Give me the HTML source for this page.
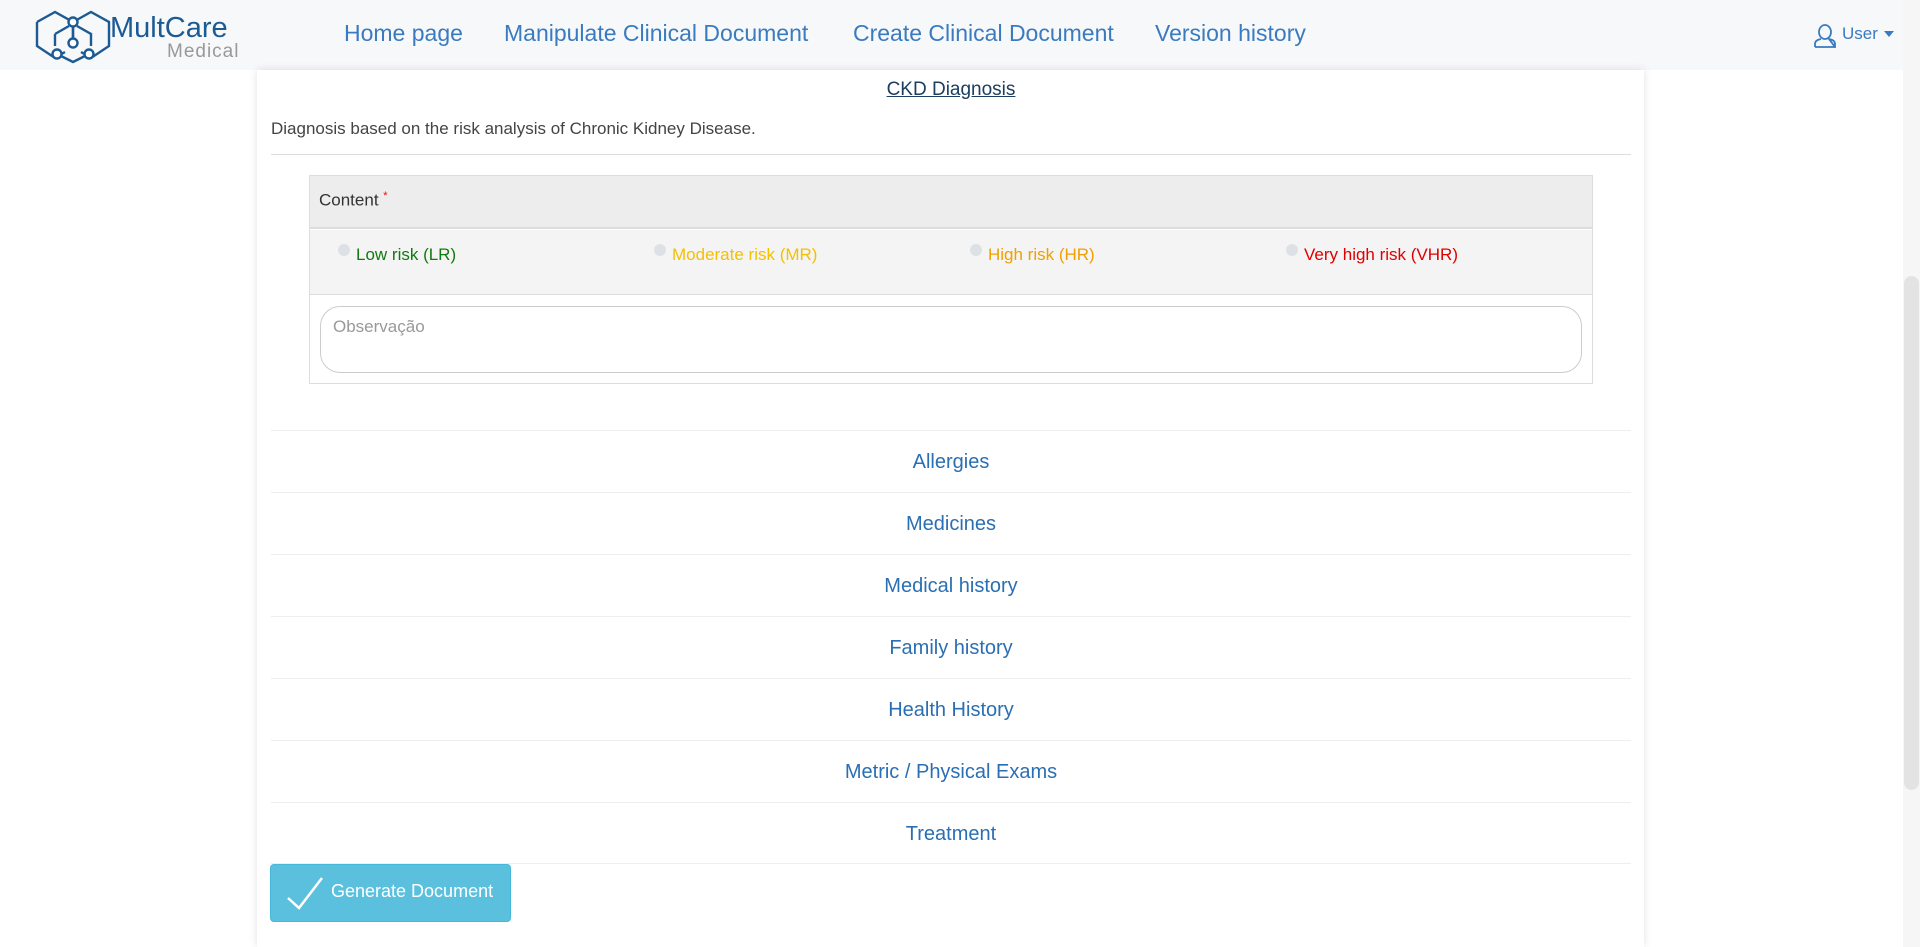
<!DOCTYPE html>
<html><head><meta charset="utf-8"><style>
*{box-sizing:border-box}
body{margin:0;width:1920px;height:947px;overflow:hidden;font-family:"Liberation Sans",sans-serif;background:#fff;position:relative}
.nav{position:absolute;left:0;top:0;width:1903px;height:70px;background:#f7f8fa}
.nav a{position:absolute;top:20px;font-size:23px;color:#3a7bbf;text-decoration:none}
.sb{position:absolute;right:0;top:0;width:17px;height:947px;background:#f6f6f6}
.thumb{position:absolute;right:1px;top:276px;width:15px;height:514px;background:#e3e3e3;border-radius:8px}
.card{position:absolute;left:257px;top:70px;width:1387px;height:877px;background:#fff;box-shadow:0 0 8px rgba(0,0,0,.12)}
.abs{position:absolute}
.acc{position:absolute;left:271px;width:1360px;height:62px;border-top:1px solid #eee;text-align:center;line-height:62px;font-size:20px;color:#2a6fb3}
.rad{position:absolute;top:244px;font-size:17px}
.rad i{display:inline-block;width:12px;height:12px;border-radius:50%;background:#dde1e6;margin-right:6px;vertical-align:4px}
</style></head><body>
<div class="nav">
<svg class="abs" style="left:35px;top:6px" width="80" height="58" viewBox="0 0 80 58" fill="none" stroke="#1c5a94" stroke-width="2.4">
<path d="M2 16 L20 6 L38 16 L38 40 M2 16 L2 40 L20 52 L30 46"/>
<path d="M38 16 L56 6 L74 16 L74 40 L56 52 L46 46"/>
<path d="M20 28 L34 20 M42 20 L56 28 L56 40 M20 28 L20 40 M26 50 L38 56 L50 50"/>
<path d="M38 16 L38 36"/>
<circle cx="38" cy="16" r="4.5" fill="#fff"/><circle cx="38" cy="37" r="4.5" fill="#fff"/>
<circle cx="22" cy="48" r="4.5" fill="#fff"/><circle cx="54" cy="48" r="4.5" fill="#fff"/>
</svg>
<div class="abs" style="left:110px;top:12px;font-size:29px;color:#1c5a94">MultCare</div>
<div class="abs" style="left:167px;top:41px;font-size:19px;color:#999;letter-spacing:1px">Medical</div>
<a style="left:344px">Home page</a>
<a style="left:504px">Manipulate Clinical Document</a>
<a style="left:853px">Create Clinical Document</a>
<a style="left:1155px">Version history</a>
<svg class="abs" style="left:1814px;top:24px" width="22" height="24" viewBox="0 0 22 24" fill="none" stroke="#3a7bbf" stroke-width="1.8"><ellipse cx="11" cy="8" rx="6" ry="7"/><path d="M1 23 L1 20 Q1 16 7 15 M15 15 Q21 16 21 20 L21 23 Z M1 23 L21 23"/></svg>
<div class="abs" style="left:1842px;top:24px;font-size:17px;color:#3a7bbf">User</div>
<div class="abs" style="left:1884px;top:31px;border-left:5px solid transparent;border-right:5px solid transparent;border-top:6px solid #3a7bbf"></div>
</div>
<div class="card"></div>
<div class="abs" style="left:271px;width:1360px;top:79px;text-align:center;font-size:19px;color:#1c3f60;text-decoration:underline">CKD Diagnosis</div>
<div class="abs" style="left:271px;top:119px;font-size:17px;color:#444">Diagnosis based on the risk analysis of Chronic Kidney Disease.</div>
<div class="abs" style="left:271px;top:154px;width:1360px;height:1px;background:#ddd"></div>
<div class="abs" style="left:309px;top:175px;width:1284px;height:209px;border:1px solid #ddd"></div>
<div class="abs" style="left:310px;top:176px;width:1282px;height:53px;background:#ededed;border-bottom:2px solid #ddd"></div>
<div class="abs" style="left:310px;top:230px;width:1282px;height:65px;background:#f4f4f4;border-bottom:1px solid #ddd"></div>
<div class="abs" style="left:319px;top:190px;font-size:17px;color:#333">Content <sup style="color:red;font-size:11px">*</sup></div>
<div class="rad" style="left:338px;color:#107a10"><i></i>Low risk (LR)</div>
<div class="rad" style="left:654px;color:#f5c000"><i></i>Moderate risk (MR)</div>
<div class="rad" style="left:970px;color:#f0a000"><i></i>High risk (HR)</div>
<div class="rad" style="left:1286px;color:#e00000"><i></i>Very high risk (VHR)</div>
<div class="abs" style="left:320px;top:306px;width:1262px;height:67px;border:1px solid #ccc;border-radius:20px;padding:10px 12px;font-size:17px;color:#999">Observação</div>
<div class="acc" style="top:430px">Allergies</div>
<div class="acc" style="top:492px">Medicines</div>
<div class="acc" style="top:554px">Medical history</div>
<div class="acc" style="top:616px">Family history</div>
<div class="acc" style="top:678px">Health History</div>
<div class="acc" style="top:740px">Metric / Physical Exams</div>
<div class="acc" style="top:802px">Treatment</div>
<div class="abs" style="left:271px;top:863px;width:1360px;height:1px;background:#eee"></div>
<div class="abs" style="left:270px;top:864px;width:241px;height:58px;background:#5bc0de;border:1px solid #46b8da;border-radius:4px"></div>
<svg class="abs" style="left:286px;top:876px" width="40" height="36" viewBox="0 0 40 36" fill="none" stroke="#fff" stroke-width="2.5"><path d="M2 22 L13 32 L36 2"/></svg>
<div class="abs" style="left:331px;top:881px;font-size:18px;color:#fff">Generate Document</div>
<div class="sb"><div class="thumb"></div></div>
</body></html>
